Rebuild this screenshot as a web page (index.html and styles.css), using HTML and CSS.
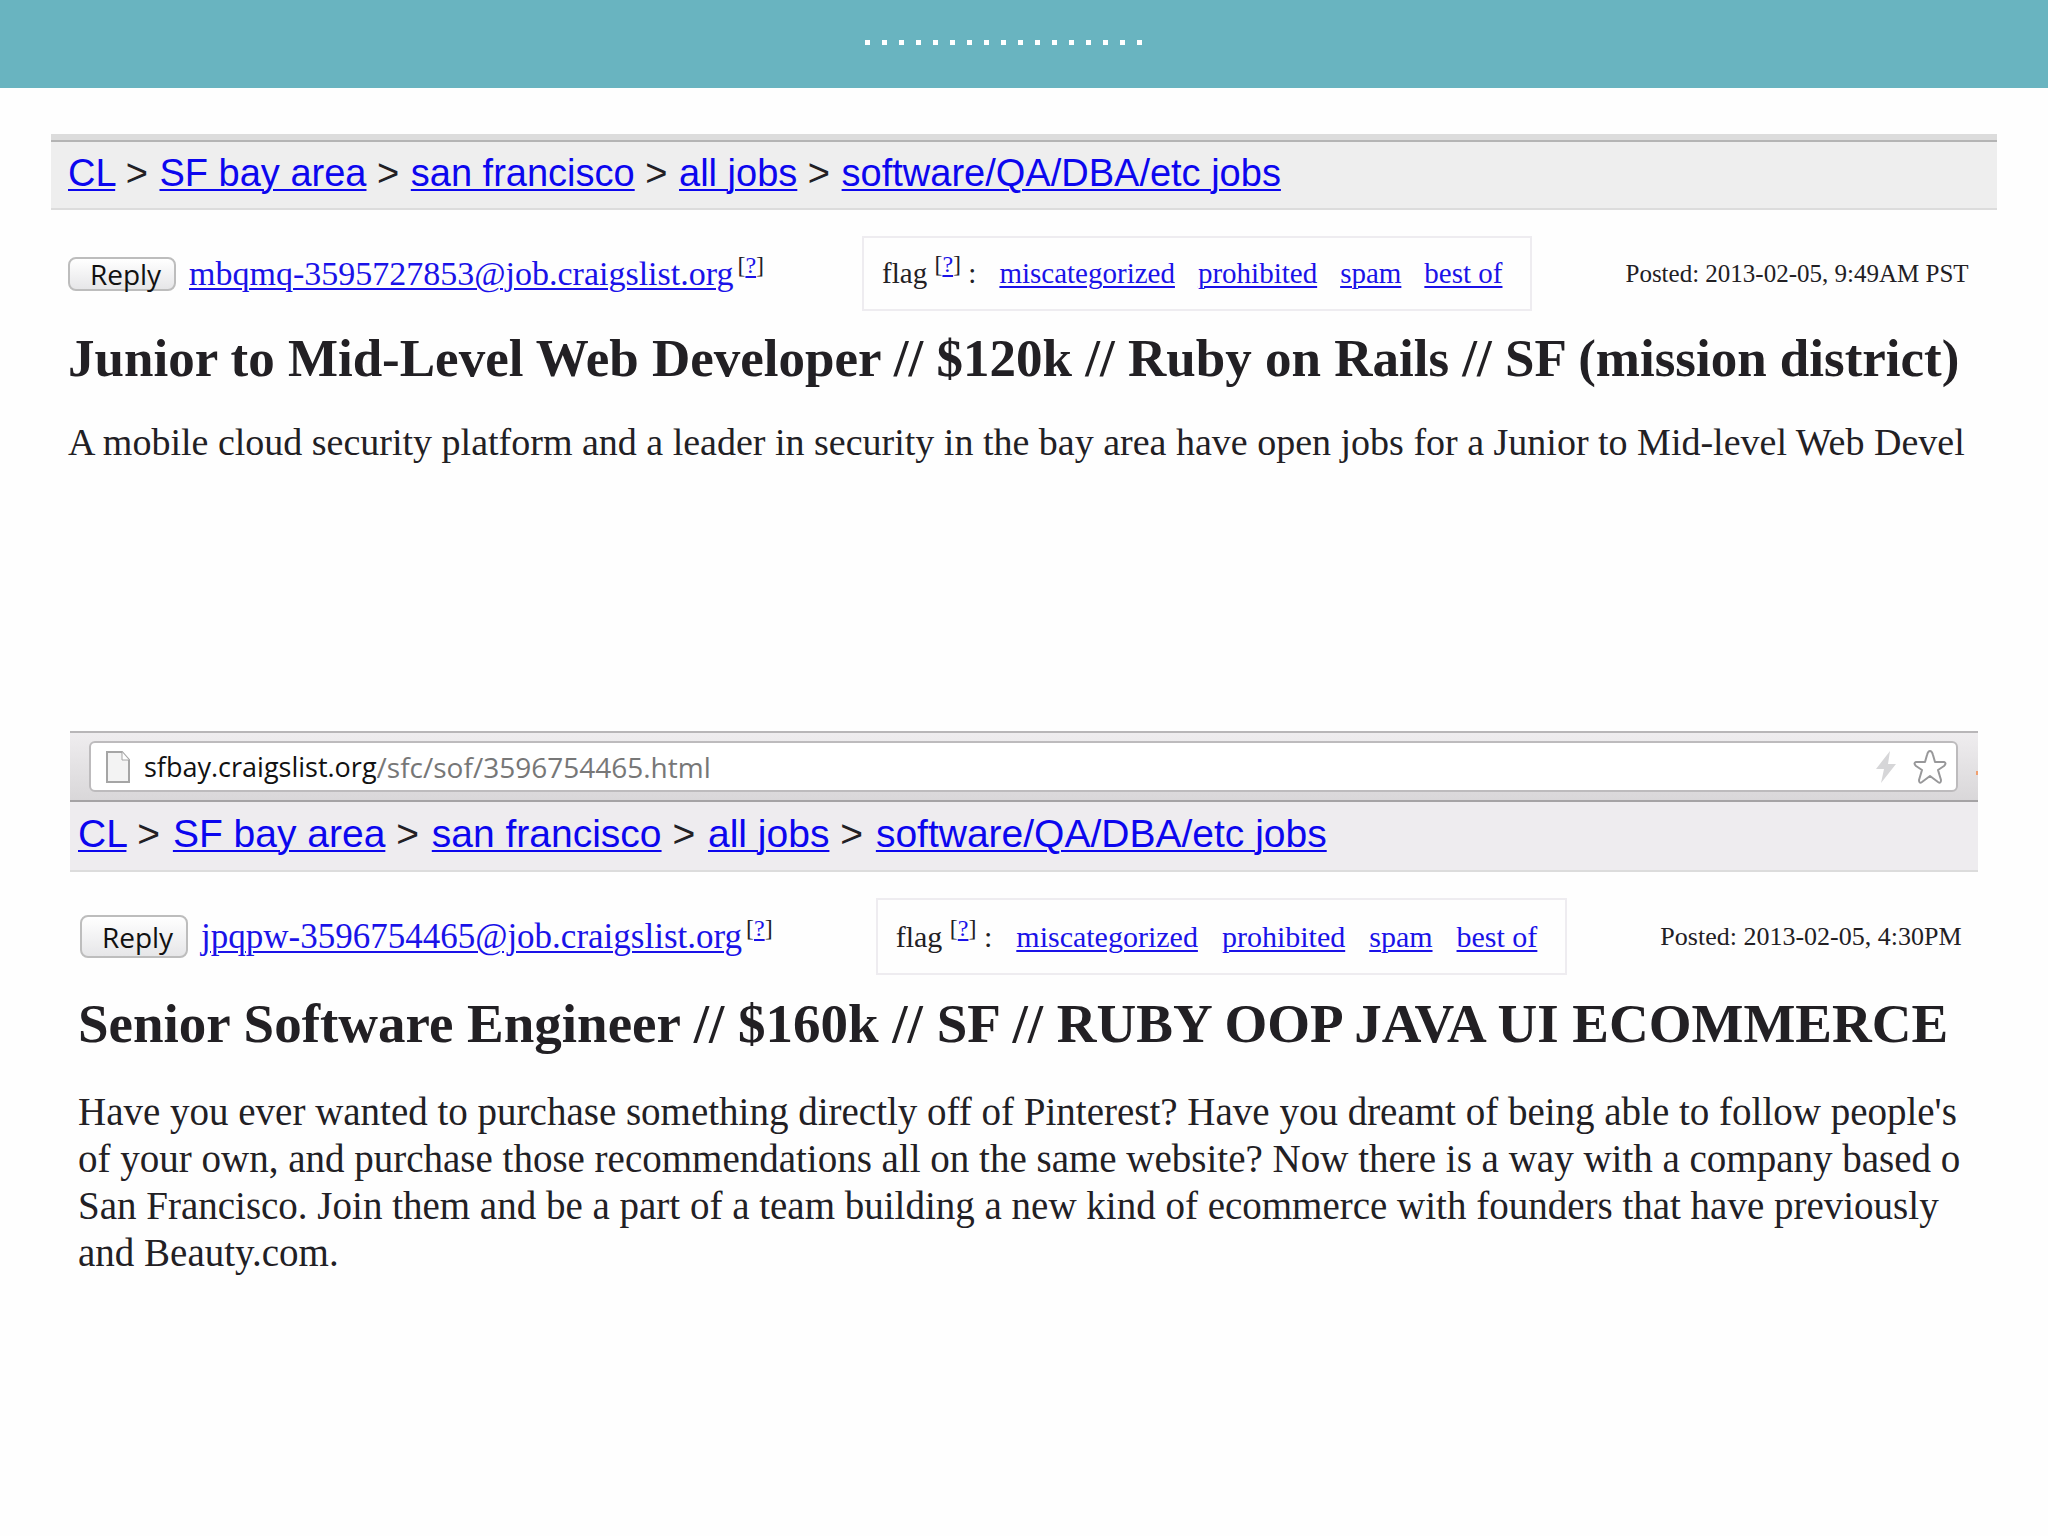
FILE: index.html
```
<!DOCTYPE html>
<html lang="en">

<head>
    <meta charset="UTF-8">
    <meta name="viewport" content="width=device-width, initial-scale=1.0">
    <title>Job posts</title>

    <link rel="stylesheet" href="styles.css">
</head>

<body>
    <header class="banner">
        <div class="dots"></div>
    </header>

    <main>
        <article class="post junior">
            <div class="strip"></div>
            <nav class="crumbs">
                <a href="#">CL</a> &gt; <a href="#">SF bay area</a> &gt; <a href="#">san francisco</a> &gt; <a href="#">all jobs</a> &gt; <a href="#">software/QA/DBA/etc jobs</a>
            </nav>
            <div class="meta">
                <div class="reply">
                    <button type="button">Reply</button>
                    <a href="#">mbqmq-3595727853@job.craigslist.org</a>
                    <sup>[<a href="#">?</a>]</sup>
                </div>
                <div class="flags">
                    <span>flag <sup>[<a href="#">?</a>]</sup> :</span>
                    <a href="#">miscategorized</a>
                    <a href="#">prohibited</a>
                    <a href="#">spam</a>
                    <a href="#">best of</a>
                </div>
                <div class="date">Posted: 2013-02-05, 9:49AM PST</div>
            </div>
            <h2>Junior to Mid-Level Web Developer // $120k // Ruby on Rails // SF (mission district)</h2>
            <p>A mobile cloud security platform and a leader in security in the bay area have open jobs for a Junior to Mid-level Web Devel</p>
        </article>

        <article class="post senior">
            <div class="toolbar">
                <div class="address">
                    <svg class="page-icon" viewBox="0 0 24 32">
                        <path d="M1 1h15l7 8v22H1z" fill="#f3f3f3" stroke="#a5a5a5" stroke-width="2" />
                        <path d="M16 1v8h7" fill="#fff" stroke="#a5a5a5" stroke-width="1" />
                    </svg>
                    <label for="url">sfbay.craigslist.org</label>
                    <input id="url" type="text" value="/sfc/sof/3596754465.html">
                    <svg class="bolt" viewBox="0 0 20 32">
                        <path d="M14 0L0 18h8L5 32l15-19h-8z" fill="#d6d6d8" />
                    </svg>
                    <svg class="star" viewBox="0 0 34 34">
                        <path d="M17 1Q19 1 20 5L22 12H31Q34 13 31 16L25 20L28 30Q28 34 25 32L17 26L9 32Q6 34 6 30L9 20L3 16Q0 13 3 12H12L14 5Q15 1 17 1z" fill="#fff" stroke="#98989a" stroke-width="2" stroke-linejoin="round" />
                    </svg>
                </div>
                <span class="extension"></span>
            </div>
            <nav class="crumbs">
                <a href="#">CL</a> &gt; <a href="#">SF bay area</a> &gt; <a href="#">san francisco</a> &gt; <a href="#">all jobs</a> &gt; <a href="#">software/QA/DBA/etc jobs</a>
            </nav>
            <div class="meta">
                <div class="reply">
                    <button type="button">Reply</button>
                    <a href="#">jpqpw-3596754465@job.craigslist.org</a>
                    <sup>[<a href="#">?</a>]</sup>
                </div>
                <div class="flags">
                    <span>flag <sup>[<a href="#">?</a>]</sup> :</span>
                    <a href="#">miscategorized</a>
                    <a href="#">prohibited</a>
                    <a href="#">spam</a>
                    <a href="#">best of</a>
                </div>
                <div class="date">Posted: 2013-02-05, 4:30PM</div>
            </div>
            <h2>Senior Software Engineer // $160k // SF // RUBY OOP JAVA UI ECOMMERCE</h2>
            <p>
                Have you ever wanted to purchase something directly off of Pinterest? Have you dreamt of being able to follow people's<br>
                of your own, and purchase those recommendations all on the same website? Now there is a way with a company based o<br>
                San Francisco. Join them and be a part of a team building a new kind of ecommerce with founders that have previously<br>
                and Beauty.com.
            </p>
        </article>
    </main>
</body>

</html>
```

FILE: styles.css
```
* {
    box-sizing: border-box;
}

body {
    margin: 0;
    background-color: #fefefe;
    font-family: "Liberation Serif", "Times New Roman", serif;
    color: #222024;
}

a {
    color: #1a12e8;
    text-decoration-thickness: 2px;
    text-underline-offset: 3px;
}

.banner {
    height: 88px;
    padding: 40px 42px 0 0;
    background-color: #69b4c0;
}

/* row of small white squares */
.dots {
    width: 277px;
    height: 5px;
    margin: 0 auto;
    background: repeating-linear-gradient(to right, #fff 0 5px, transparent 5px 17px);
}

.post {
    overflow: hidden;
    white-space: nowrap;
}

.junior {
    margin: 46px 51px 0;
}

.senior {
    margin: 265px 70px 0;
}

.strip {
    height: 8px;
    background-color: #dcdcdc;
    border-bottom: 2px solid #b4b4b4;
}

.crumbs {
    height: 68px;
    padding: 0 17px;
    background-color: #eee;
    border-bottom: 2px solid #dcdcdc;
    font-family: "Liberation Sans", Helvetica, Arial, sans-serif;
    font-size: 38px;
    line-height: 62px;
}

.crumbs a {
    margin-left: 1px;
    color: #0c06ee;
}

.meta {
    display: flex;
    align-items: center;
    margin-top: 26px;
    padding-left: 17px;
    font-size: 29px;
}

.meta > * {
    flex: none;
}

.reply {
    display: flex;
    align-items: center;
    font-size: 34px;
}

.reply button {
    width: 108px;
    height: 34px;
    margin-right: 13px;
    padding: 0 0 0 7px;
    border: 2px solid #bdbdbd;
    border-radius: 8px;
    background: linear-gradient(#fff, #e6e6e8);
    font-family: "Open Sans", sans-serif;
    font-size: 28px;
    line-height: 26px;
    color: #111;
}

sup {
    font-size: 24px;
    line-height: 0;
}

.reply sup {
    margin: 0 0 18px 4px;
}

.flags {
    display: flex;
    align-items: center;
    gap: 23px;
    height: 75px;
    margin: 0 93px 0 98px;
    padding: 0 28px 0 18px;
    border: 2px solid #eeecf0;
}

.date {
    font-size: 25px;
}

h2 {
    margin: 16px 0 0;
    padding-left: 17px;
    font-size: 53px;
    line-height: 62px;
}

p {
    margin: 30px 0 0;
    padding-left: 17px;
    font-size: 38px;
    line-height: 47px;
}

.toolbar {
    display: flex;
    align-items: center;
    height: 71px;
    padding-left: 19px;
    border-top: 2px solid #b8b6b8;
    border-bottom: 2px solid #a5a3a5;
    background: linear-gradient(#efedef, #d9d7d9);
}

.address {
    display: flex;
    align-items: center;
    flex: 1;
    height: 51px;
    padding: 0 9px 0 15px;
    border: 2px solid #bdbbbd;
    border-radius: 6px;
    background-color: #fff;
    font-family: "Open Sans", sans-serif;
    font-size: 27px;
    color: #111;
}

.address input {
    flex: 1;
    min-width: 0;
    padding: 0;
    border: 0;
    outline: 0;
    background: none;
    font: inherit;
    font-size: 28px;
    color: #777;
}

.page-icon {
    width: 24px;
    height: 32px;
    margin-right: 14px;
}

.bolt {
    width: 20px;
    height: 32px;
    margin-right: 17px;
}

.star {
    width: 34px;
    height: 34px;
}

/* edge of the next toolbar button */
.extension {
    width: 2px;
    height: 4px;
    margin: 12px 0 0 18px;
    background-color: #f0a070;
}

.senior .crumbs {
    height: 70px;
    padding: 0 8px;
    background-color: #eeecef;
    font-size: 39px;
    line-height: 64px;
}

.senior .crumbs a {
    margin-left: 2px;
}

.senior .crumbs a:first-child,
.crumbs a:first-child {
    margin-left: 0;
}

.senior .meta {
    padding-left: 10px;
    font-size: 30px;
}

.senior .reply {
    font-size: 35px;
}

.senior .reply button {
    height: 43px;
}

.senior .flags {
    gap: 24px;
    height: 77px;
    margin-left: 103px;
}

.senior .date {
    font-size: 26px;
}

.senior h2,
.senior p {
    padding-left: 8px;
}

.senior h2 {
    margin-top: 18px;
    font-size: 55px;
}

.senior p {
    margin-top: 33px;
    font-size: 39px;
}
```
